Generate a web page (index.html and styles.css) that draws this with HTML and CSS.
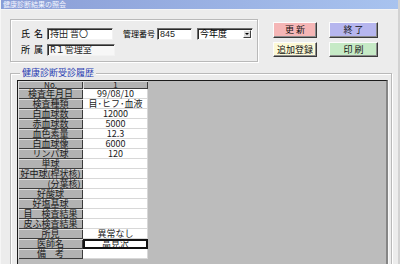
FILE: index.html
```html
<!DOCTYPE html>
<html lang="ja">
<head>
<meta charset="utf-8">
<title>健康診断結果の照会</title>
<link rel="stylesheet" href="styles.css">
</head>
<body>
<div class="window">
  <div class="titlebar">健康診断結果の照会</div>
  <div class="client">
    <div class="top">
      <div class="group group-info">
        <div class="field-row">
          <span class="label">氏 名</span>
          <span class="input input-name">持田 晋〇</span>
          <span class="label label-no">管理番号</span>
          <span class="input input-no">845</span>
          <span class="select"><span class="select-text">今年度</span><span class="select-btn"><span class="arrow"></span></span></span>
        </div>
        <div class="field-row">
          <span class="label">所 属</span>
          <span class="input input-dept">R１管理室</span>
        </div>
      </div>
      <div class="buttons">
        <button class="btn btn-update">更 新</button>
        <button class="btn btn-exit">終 了</button>
        <button class="btn btn-add">追加登録</button>
        <button class="btn btn-print">印 刷</button>
      </div>
    </div>
    <fieldset class="group group-history">
      <legend>健康診断受診履歴</legend>
      <div class="sheet-wrap">
        <div class="sheet">
          <div class="th head">No.</div><div class="th head">1</div>
          <div class="th">検査年月日</div><div class="td">99/08/10</div>
          <div class="th">検査種類</div><div class="td">目･ヒフ･血液</div>
          <div class="th">白血球数</div><div class="td">12000</div>
          <div class="th">赤血球数</div><div class="td">5000</div>
          <div class="th">血色素量</div><div class="td">12.3</div>
          <div class="th">白血球像</div><div class="td">6000</div>
          <div class="th">リンパ球</div><div class="td">120</div>
          <div class="th">単球</div><div class="td"></div>
          <div class="th">好中球(桿状核)</div><div class="td"></div>
          <div class="th">　　　(分葉核)</div><div class="td"></div>
          <div class="th">好酸球</div><div class="td"></div>
          <div class="th">好塩基球</div><div class="td"></div>
          <div class="th">目　検査結果</div><div class="td"></div>
          <div class="th">皮ふ検査結果</div><div class="td"></div>
          <div class="th">所見</div><div class="td">異常なし</div>
          <div class="th">医師名</div><div class="td selected">高見沢</div>
          <div class="th">備　考</div><div class="td"></div>
        </div>
      </div>
    </fieldset>
  </div>
</div>
</body>
</html>
```

FILE: styles.css
```css
* { box-sizing: border-box; }
html, body { margin: 0; padding: 0; }
body {
  width: 400px;
  height: 264px;
  overflow: hidden;
  background: #ececec;
  font-family: "Noto Sans CJK JP", "Noto Sans", sans-serif;
  color: #000;
}
.window {
  width: 400px;
  height: 264px;
  border-left: 1px solid #f6f6f6;
  border-right: 2px solid #d2d2d2;
  overflow: hidden;
}
.titlebar {
  height: 10px;
  background: linear-gradient(90deg, #8a9dd6, #a8c3ef);
  border-bottom: 1px solid #f4f4f4;
  color: #f4f6ff;
  font-size: 7px;
  line-height: 9px;
  padding-left: 2px;
  white-space: nowrap;
}
.client {
  padding: 9px 7px 0 9px;
}
.top {
  display: flex;
  align-items: flex-start;
}
.group {
  border: 1px solid #b9b9b9;
  box-shadow: inset 1px 1px 0 #fff, 1px 1px 0 #fff;
}
.group-info {
  width: 248px;
  height: 43px;
  padding: 8px 0 0 10px;
}
.field-row {
  display: flex;
  align-items: center;
  height: 12px;
  margin-bottom: 4px;
  font-size: 9px;
}
.label {
  width: 26px;
  white-space: nowrap;
  line-height: 12px;
  word-spacing: 2px;
}
.label-no {
  width: 34px;
  margin-left: 10px;
  font-size: 8px;
}
.input {
  height: 12px;
  background: #fff;
  border: 1px solid;
  border-color: #6e6e6e #f2f2f2 #f2f2f2 #6e6e6e;
  box-shadow: inset 1px 1px 0 #2a2a2a;
  padding-left: 2px;
  line-height: 10px;
  font-size: 9px;
  white-space: nowrap;
  color: #222;
}
.input-name { width: 66px; }
.input-no { width: 35px; font-family: "Liberation Sans", sans-serif; }
.input-dept { width: 68px; background: #f7f7f7; }
.select {
  display: flex;
  width: 56px;
  height: 12px;
  margin-left: 5px;
  background: #fff;
  border: 1px solid;
  border-color: #6e6e6e #f2f2f2 #f2f2f2 #6e6e6e;
  box-shadow: inset 1px 1px 0 #2a2a2a;
}
.select-text {
  flex: 1;
  padding-left: 2px;
  font-size: 9px;
  line-height: 10px;
}
.select-btn {
  width: 8px;
  margin: 1px 1px 1px 0;
  background: #dcdcdc;
  border: 1px solid;
  border-color: #fff #404040 #404040 #fff;
  display: flex;
  align-items: center;
  justify-content: center;
}
.arrow {
  width: 0;
  height: 0;
  border-left: 2px solid transparent;
  border-right: 2px solid transparent;
  border-top: 2px solid #000;
}
.buttons {
  display: grid;
  grid-template-columns: 44px 49px;
  grid-template-rows: 16px 15px;
  column-gap: 12px;
  row-gap: 4px;
  margin: 3px 0 0 15px;
}
.btn {
  margin: 0;
  padding: 0;
  font-family: "Noto Sans CJK JP", sans-serif;
  font-size: 9px;
  line-height: 12px;
  color: #111;
  border: 1px solid;
  border-color: #fcfcfc #3a3a3a #3a3a3a #fcfcfc;
  box-shadow: inset -1px -1px 0 #8c8c8c;
  white-space: nowrap;
}
.btn-update { background: #f5b6b6; }
.btn-exit { background: #b6b6ee; }
.btn-add { background: #fcf9d6; }
.btn-print { background: #c6eac6; }

.group-history {
  margin: 6px 0 0 0;
  padding: 2px 3px 0 6px;
  min-width: 0;
  width: 382px;
}
.group-history legend {
  margin-left: 3px;
  padding: 0 2px;
  font-size: 9px;
  line-height: 10px;
  color: #2a3cb2;
  background: #ececec;
}
.sheet-wrap {
  height: 200px;
  background: #bcbcbc;
  border-top: 1px solid #1a1a1a;
  border-left: 1px solid #1a1a1a;
  border-right: 2px solid #858585;
  box-shadow: 1px 0 0 #f8f8f8;
}
.sheet {
  display: grid;
  grid-template-columns: 65px 65px;
  grid-template-rows: 8px repeat(17, 10px);
  font-size: 9px;
}
.th, .td {
  display: flex;
  align-items: center;
  justify-content: center;
  line-height: 10px;
  white-space: nowrap;
  color: #1a1a1a;
}
.th {
  background: #b2b2b2;
  box-shadow: inset 1px 1px 0 #dedede, inset -1px -1px 0 #3c3c3c;
}
.th.head {
  font-size: 8px;
  line-height: 8px;
}
.td {
  background: #fff;
  box-shadow: inset -1px -1px 0 #d8d8d8;
}
.td.selected {
  box-shadow: inset 0 0 0 2px #111;
}
```
